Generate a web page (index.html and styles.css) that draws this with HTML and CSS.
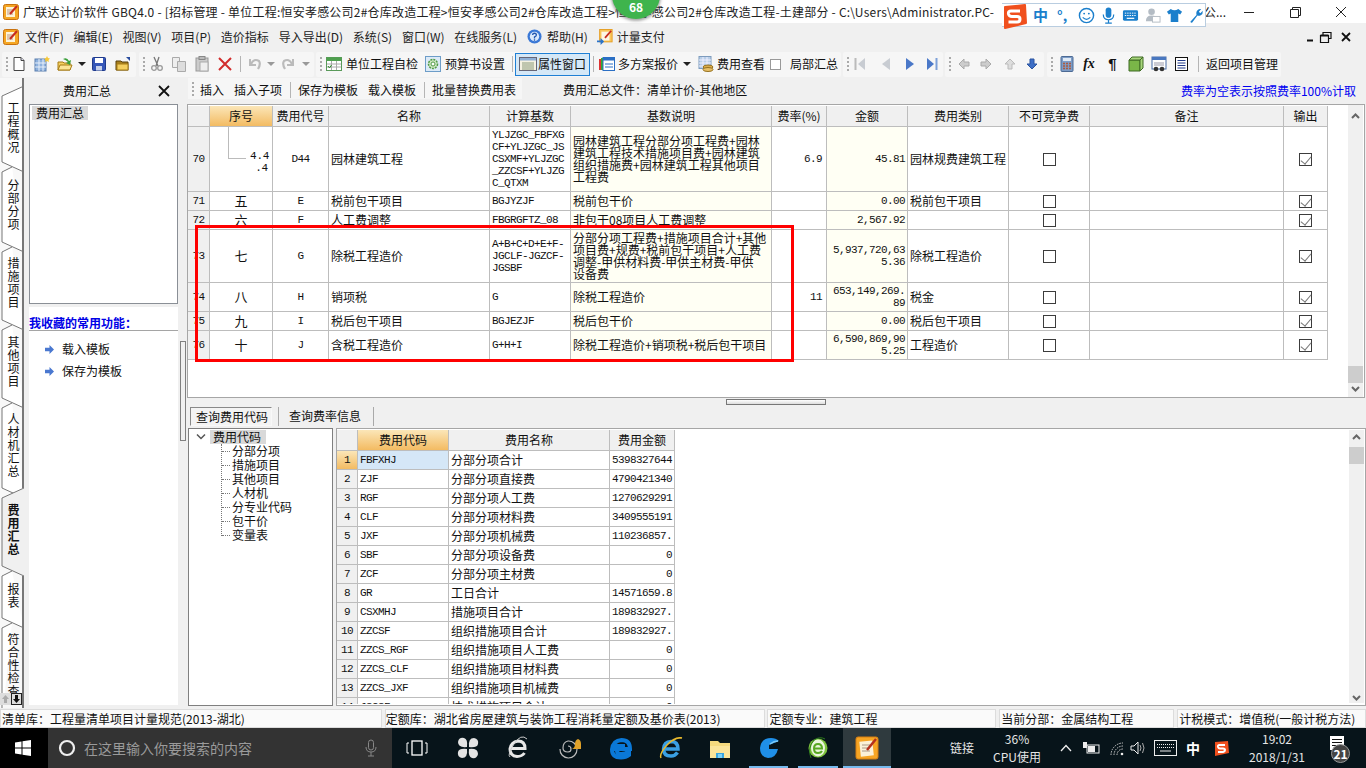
FILE: index.html
```html
<!DOCTYPE html>
<html lang="zh-CN">
<head>
<meta charset="utf-8">
<title>广联达计价软件 GBQ4.0</title>
<link rel="stylesheet" href="styles.css">
</head>
<body>
<header class="titlebar">
  <svg class="appicon" viewBox="0 0 16 16"><rect x="0.5" y="0.5" width="15" height="15" rx="2" fill="#f5a623" stroke="#c9720e"/><rect x="3" y="3" width="9" height="10" fill="#fdf3d8"/><path d="M4 6h6M4 8h5M4 10h6" stroke="#b98" /><path d="M14 2L7 10" stroke="#c62b1e" stroke-width="2"/></svg>
  <div class="ttext">广联达计价软件 GBQ4.0 - [招标管理 - 单位工程:恒安孝感公司2#仓库改造工程&gt;恒安孝感公司2#仓库改造工程&gt;恒安孝感公司2#仓库改造工程-土建部分 - C:\Users\Administrator.PC-</div>
  <div class="tend">公...</div>
  <div class="winctl">
    <svg viewBox="0 0 46 22"><path d="M18 11.5h10" stroke="#222"/></svg>
    <svg viewBox="0 0 46 22"><path d="M18.5 8.5h8v8h-8zM20.5 8V6.5h8v8H27" fill="none" stroke="#222"/></svg>
    <svg viewBox="0 0 46 22"><path d="M18 6l10 10M28 6L18 16" stroke="#222"/></svg>
  </div>
</header>
<div class="badge"><span>68</span></div>
<div class="sogou">
  <svg class="slogo" viewBox="0 0 25 25"><path d="M3 3L23 1L24 19L3 24Z" fill="#f0501e" stroke="#f0501e" stroke-width="2" stroke-linejoin="round"/><path d="M18 7H9Q6 7 6.500 10Q7 12.500 10 12.500H15Q18 12.500 18 15Q18 18 15 18H6.500" fill="none" stroke="#fff" stroke-width="3"/></svg>
  <span class="szh">中</span><span class="sdot">°,</span>
  <svg class="sic" viewBox="0 0 18 18"><circle cx="9" cy="9" r="7.500" fill="none" stroke="#1b7fcc" stroke-width="1.500"/><circle cx="6.500" cy="7" r="1" fill="#1b7fcc"/><circle cx="11.500" cy="7" r="1" fill="#1b7fcc"/><path d="M5 11q4 4 8 0" fill="none" stroke="#1b7fcc" stroke-width="1.300"/></svg>
  <svg class="sic" viewBox="0 0 18 18"><rect x="6" y="0.500" width="6" height="11" rx="3" fill="#1b7fcc"/><path d="M3.500 8q0 5.500 5.500 5.500t5.500-5.500M9 13.500V17M5.500 17h7" fill="none" stroke="#1b7fcc" stroke-width="1.300"/></svg>
  <svg class="sic" viewBox="0 0 18 18"><rect x="1" y="3.500" width="16" height="11" rx="1.500" fill="#1b7fcc"/><path d="M3 6.500h12M3 9h12" stroke="#fff" stroke-dasharray="1.500 1"/><path d="M5 12h8" stroke="#fff" stroke-width="1.300"/></svg>
  <svg class="sic" viewBox="0 0 18 18"><circle cx="8" cy="5" r="3.500" fill="#b4bcc4"/><path d="M2 15q0-6 6-6t6 6z" fill="#b4bcc4"/><rect x="9" y="10" width="8" height="6" fill="#fff" stroke="#b4bcc4"/></svg>
  <svg class="sic" viewBox="0 0 18 18"><path d="M5 2L1 5l2 3 2-1v9h8V7l2 1 2-3-4-3q-4 3-8 0z" fill="#1b7fcc"/></svg>
  <svg class="sic" viewBox="0 0 18 18"><path d="M2.500 15.500L9 8.500Q8 4 11.500 2.500Q13 2 14 2.200L11.500 5l1.500 1.500L15.700 4Q16 7.500 13.500 8.800Q11.500 9.800 10 9L4.500 16.500Q3 17 2.500 15.500z" fill="#1b7fcc"/></svg>
</div>

<nav class="menubar">
  <svg class="appicon" viewBox="0 0 16 16"><rect x="0.5" y="0.5" width="15" height="15" rx="2" fill="#f5a623" stroke="#c9720e"/><rect x="3" y="3" width="9" height="10" fill="#fdf3d8"/><path d="M4 6h6M4 8h5M4 10h6" stroke="#b98"/><path d="M14 2L7 10" stroke="#c62b1e" stroke-width="2"/></svg>
  <span class="mi m1">文件(F)</span><span class="mi">编辑(E)</span><span class="mi">视图(V)</span><span class="mi">项目(P)</span><span class="mi">造价指标</span><span class="mi">导入导出(D)</span><span class="mi">系统(S)</span><span class="mi">窗口(W)</span><span class="mi">在线服务(L)</span>
  <svg class="i15 ml10" viewBox="0 0 16 16"><circle cx="8" cy="8" r="7.500" fill="#3a78d6"/><circle cx="8" cy="8" r="5" fill="#dbe9fb"/><path d="M6 6.500q0-2 2-2t2 2q0 1.500-2 2V10M8 11v1.500" fill="none" stroke="#2458b0" stroke-width="1.400"/></svg>
  <span class="mi ml5">帮助(H)</span>
  <svg class="i18 ml8" viewBox="0 0 18 18"><rect x="3" y="0.500" width="14" height="14" fill="#f9c75c" stroke="#e49a1c"/><rect x="5" y="3" width="9" height="10" fill="#fdf6e5"/><path d="M16 2L9 10" stroke="#c62b1e" stroke-width="2"/><path d="M0 13h4v-3l4 4-4 4v-3H0z" fill="#2b73c9"/></svg>
  <span class="mi ml3">计量支付</span>
  <div class="mdi">
    <svg viewBox="0 0 60 14"><path d="M5 10.500h6" stroke="#111" stroke-width="2"/><path d="M18.500 5.500h8v7h-8z M21 5V2.500h8v6h-2" fill="none" stroke="#111" stroke-width="1.200"/><path d="M18.500 5.500h8" stroke="#111" stroke-width="2"/><path d="M40 3l8 8M48 3l-8 8" stroke="#111" stroke-width="1.800"/></svg>
  </div>
</nav>

<div class="toolbar">
  <div class="seg s1">
    <i class="grip"></i>
    <svg class="i16 ml3" viewBox="0 0 16 16"><path d="M3 1.500h7l3 3v10H3z" fill="#fff" stroke="#444"/><path d="M10 1.500v3h3" fill="#dde" stroke="#444"/></svg>
    <svg class="i16 ml7" viewBox="0 0 16 16"><rect x="1" y="3" width="11" height="12" fill="#8fb2de" stroke="#5b7fae"/><path d="M1 7h11M1 11h11M5 3v12M9 3v12" stroke="#e8f0fa"/><path d="M13 0l1 2 2 .5-1.500 1.500.5 2-2-1-2 1 .5-2L10 2.500 12 2z" fill="#f6c93b"/></svg>
    <svg class="i16 ml7" viewBox="0 0 16 16"><path d="M1 6h5l1 1h6v7H1z" fill="#f4cf5f" stroke="#a67c16"/><path d="M1 14l2-5h12l-2 5z" fill="#fce596" stroke="#a67c16"/><path d="M6 3q4-2 6 2l2-1-1 5-4-2 2-1q-2-2-5-3z" fill="#3aa03a"/></svg>
    <i class="caret ml5"></i>
    <svg class="i16 ml5" viewBox="0 0 16 16"><rect x="1.500" y="1.500" width="13" height="13" rx="1" fill="#3657b8" stroke="#1f3a8c"/><rect x="4" y="2" width="8" height="5" fill="#fff"/><rect x="5" y="10" width="6" height="4.500" fill="#c8d2ea"/></svg>
    <svg class="i16 ml8" viewBox="0 0 16 16"><path d="M1 5h5l1 1h6v8H1z" fill="#a8801f" stroke="#59410c"/><rect x="2" y="8" width="11" height="6" fill="#f4cf5f" stroke="#a67c16"/><path d="M11 1h4v4z" fill="#2a4d9e"/></svg>
  </div>
  <div class="seg s2">
    <i class="grip"></i>
    <svg class="i16 ml4 dim" viewBox="0 0 16 16"><path d="M5 1l4 9M10 1L7 10" stroke="#777" stroke-width="1.300"/><circle cx="5" cy="12" r="2.300" fill="none" stroke="#999" stroke-width="1.300"/><circle cx="11" cy="12" r="2.300" fill="none" stroke="#999" stroke-width="1.300"/></svg>
    <svg class="i16 ml6 dim" viewBox="0 0 16 16"><path d="M1.500 1.500h7v10h-7z" fill="#eee" stroke="#aaa"/><path d="M6.500 5.500h8v10h-8z" fill="#ddd" stroke="#aaa"/></svg>
    <svg class="i16 ml7 dim" viewBox="0 0 16 16"><rect x="2" y="2" width="12" height="13" fill="#ccc" stroke="#999"/><rect x="5" y="0.500" width="6" height="3" fill="#bbb" stroke="#888"/><rect x="6" y="6" width="8" height="9" fill="#eee" stroke="#aaa"/></svg>
    <svg class="i16 ml7" viewBox="0 0 16 16"><path d="M2 2l12 12M14 2L2 14" stroke="#d22c2c" stroke-width="2"/></svg>
    <i class="sep ml7"></i>
    <svg class="i16 ml5" viewBox="0 0 16 16"><path d="M4 3v6h6" fill="none" stroke="#bbb" stroke-width="2"/><path d="M5 8q3-6 8-3 2 3-1 8" fill="none" stroke="#bbb" stroke-width="2.200"/></svg>
    <i class="caret off ml5"></i>
    <svg class="i16 ml6" viewBox="0 0 16 16"><path d="M12 3v6H6" fill="none" stroke="#bbb" stroke-width="2"/><path d="M11 8q-3-6-8-3-2 3 1 8" fill="none" stroke="#bbb" stroke-width="2.200"/></svg>
    <i class="caret off ml5"></i>
  </div>
  <div class="seg s3">
    <i class="grip"></i>
    <svg class="i16 ml4" viewBox="0 0 16 16"><rect x="0.500" y="1.500" width="15" height="13" fill="#fff" stroke="#5a9a5a"/><rect x="0.500" y="1.500" width="15" height="3.500" fill="#4fa04f"/><path d="M1 8h14M1 11h14M5.500 5v9M10.500 5v9" stroke="#aaa"/><path d="M2 10l1.500 2 2-3" stroke="#2c8c2c" fill="none"/></svg>
    <span class="ti ml4">单位工程自检</span>
    <svg class="i16 ml7" viewBox="0 0 16 16"><rect x="0.500" y="0.500" width="15" height="15" fill="#dceaf7" stroke="#6d9dc8"/><circle cx="8" cy="8" r="4.500" fill="#cfe8c0" stroke="#4f9a46" stroke-width="1.500" stroke-dasharray="2 1"/><circle cx="8" cy="8" r="2" fill="#fff" stroke="#4f9a46"/></svg>
    <span class="ti ml4">预算书设置</span>
    <i class="sep ml7"></i>
    <div class="tbtn ml2">
      <svg class="i18" viewBox="0 0 18 16"><rect x="0.500" y="1.500" width="17" height="13" fill="#f4f1e2" stroke="#667"/><rect x="1" y="2" width="16" height="2.500" fill="#8fb0d6"/><path d="M3 7h12M3 9h12M3 11h12M3 13h12" stroke="#8a9a7a"/></svg>
      <span class="ti">属性窗口</span>
    </div>
    <i class="sep ml3"></i>
    <svg class="i16 ml5" viewBox="0 0 16 16"><rect x="0" y="3" width="3" height="11" fill="#d33"/><rect x="2" y="2" width="3" height="12" fill="#3a3"/><rect x="4" y="1.500" width="11.500" height="13" fill="#fff" stroke="#2b6fc4"/><rect x="4" y="1.500" width="11.500" height="3" fill="#2b6fc4"/><path d="M6 8h8M6 11h8" stroke="#2b6fc4"/></svg>
    <span class="ti ml3">多方案报价</span>
    <i class="caret ml5"></i>
    <svg class="i16 ml7" viewBox="0 0 16 16"><rect x="1" y="0.500" width="12" height="12" fill="#b9cfe8" stroke="#7d9bbd"/><path d="M1 4h12M1 7h12M1 10h12M5 1v11M9 1v11" stroke="#eef"/><ellipse cx="10" cy="11" rx="5" ry="2" fill="#d9ab4d" stroke="#94701f"/><ellipse cx="10" cy="13.500" rx="5" ry="2" fill="#e8c068" stroke="#94701f"/></svg>
    <span class="ti ml3">费用查看</span>
    <i class="tcb ml5"></i>
    <span class="ti ml9">局部汇总</span>
  </div>
  <div class="seg s4">
    <i class="grip"></i>
    <svg class="i12 ml5" viewBox="0 0 12 14"><path d="M1.500 1v12" stroke="#bbb" stroke-width="2"/><path d="M11 1v12L4 7z" fill="#c8ccd2"/></svg>
    <svg class="i12 ml14" viewBox="0 0 12 14"><path d="M10 1v12L2 7z" fill="#c8ccd2"/></svg>
    <svg class="i12 ml12" viewBox="0 0 12 14"><path d="M2 1v12l8-6z" fill="#4a78c8"/></svg>
    <svg class="i12 ml10" viewBox="0 0 12 14"><path d="M10.500 1v12" stroke="#7da0d8" stroke-width="2"/><path d="M1 1v12l7-6z" fill="#4a78c8"/></svg>
  </div>
  <div class="seg s5">
    <i class="grip"></i>
    <svg class="i12 ml7" viewBox="0 0 12 12"><path d="M6 1L1 6l5 5V8h5V4H6z" fill="#ccc" stroke="#aaa"/></svg>
    <svg class="i12 ml10" viewBox="0 0 12 12"><path d="M6 1l5 5-5 5V8H1V4h5z" fill="#ccc" stroke="#aaa"/></svg>
    <svg class="i12 ml12" viewBox="0 0 12 12"><path d="M1 6l5-5 5 5H8v5H4V6z" fill="#ddd" stroke="#bbb"/></svg>
    <svg class="i12 ml10" viewBox="0 0 12 12"><path d="M1 6l5 5 5-5H8V1H4v5z" fill="#3e6fc6" stroke="#2b55a0"/></svg>
  </div>
  <div class="seg s6">
    <i class="grip"></i>
    <svg class="i16 ml6" viewBox="0 0 16 16"><rect x="2" y="0.500" width="12" height="15" rx="1" fill="#7c9cc6" stroke="#4c6a94"/><rect x="4" y="2" width="8" height="3" fill="#dfe9f5"/><path d="M4 7.500h2M7 7.500h2M10 7.500h2M4 10h2M7 10h2M10 10h2M4 12.500h2M7 12.500h2M10 12.500h2" stroke="#ad5a3d" stroke-width="1.500"/></svg>
    <span class="fx ml6">fx</span>
    <span class="pil ml8">¶</span>
    <svg class="i16 ml8" viewBox="0 0 16 16"><path d="M1 4h11v11H1z" fill="#7ab648" stroke="#3f6a24"/><path d="M1 4l3-3h11l-3 3zM12 4l3-3v11l-3 3z" fill="#a8d67c" stroke="#3f6a24"/></svg>
    <svg class="i16 ml7" viewBox="0 0 16 16"><rect x="1" y="1" width="14" height="12" fill="#fff" stroke="#4a6ea8"/><rect x="1" y="1" width="14" height="3" fill="#4a78c0"/><path d="M3 7h10M3 9h10" stroke="#99a"/><circle cx="5" cy="13" r="2.300" fill="#333"/><circle cx="11" cy="13" r="2.300" fill="#333"/></svg>
    <svg class="i16 ml7" viewBox="0 0 16 16"><rect x="1.500" y="1.500" width="12" height="13" fill="#fff" stroke="#111"/><path d="M3.500 4.500h8M3.500 7h8M3.500 9.500h8M3.500 12h8" stroke="#223a88"/></svg>
    <i class="sep ml8"></i>
    <span class="ti ml7">返回项目管理</span>
  </div>
</div>

<div class="work">
  <aside class="rail">
    <svg class="railart" viewBox="0 78 24 630">
      <g fill="#fff" stroke="#777">
        <path d="M24 86L2 96V162L24 172"/>
        <path d="M12 167L2 172V242L24 252"/>
        <path d="M12 247L2 252V320L24 330"/>
        <path d="M12 325L2 330V398L24 408"/>
        <path d="M12 403L2 408V488L24 498"/>
        <path d="M12 571L2 576V618L24 628"/>
        <path d="M12 623L2 628V720"/>
      </g>
      <path d="M24 488L2 498V566L24 576" fill="#f0f0f0" stroke="#777"/>
      <path d="M23 78V488M23 576V708" stroke="#777" stroke-width="2" fill="none"/>
    </svg>
    <div class="rl">工程概况</div>
    <div class="rl">分部分项</div>
    <div class="rl">措施项目</div>
    <div class="rl">其他项目</div>
    <div class="rl">人材机汇总</div>
    <div class="rl on">费用汇总</div>
    <div class="rl">报表</div>
    <div class="rl">符合性检查</div>
    <div class="railnav">
      <svg viewBox="0 0 11 12"><rect width="11" height="12" fill="#ddd"/><path d="M5.500 2L2 6h2v4h3V6h2z" fill="#aaa"/></svg>
      <svg viewBox="0 0 11 12"><rect x="0.500" y="0.500" width="10" height="11" fill="#ddd" stroke="#222"/><path d="M5.500 10L2 6h2V2h3v4h2z" fill="#111"/></svg>
    </div>
  </aside>

  <section class="side">
    <div class="sidehead"><span>费用汇总</span><svg viewBox="0 0 12 12"><path d="M1 1l10 10M11 1L1 11" stroke="#111" stroke-width="1.800"/></svg></div>
    <div class="listbox"><span class="selitem">费用汇总</span></div>
    <div class="fav">
      <div class="favhead">我收藏的常用功能：</div>
      <div class="favitem"><svg viewBox="0 0 10 10"><path d="M0 3h5V0l5 5-5 5V7H0z" fill="#4a78d0"/></svg>载入模板</div>
      <div class="favitem"><svg viewBox="0 0 10 10"><path d="M0 3h5V0l5 5-5 5V7H0z" fill="#4a78d0"/></svg>保存为模板</div>
    </div>
  </section>
  <div class="vsplit"><i></i></div>

  <main class="main">
    <div class="bar2">
      <div class="seg2">
        <i class="grip"></i>
        <span class="ml6">插入</span><span class="ml10">插入子项</span><i class="sep ml8"></i><span class="ml7">保存为模板</span><span class="ml10">载入模板</span><i class="sep ml8"></i><span class="ml7">批量替换费用表</span>
      </div>
      <div class="filelabel">费用汇总文件：清单计价-其他地区</div>
      <div class="ratenote">费率为空表示按照费率100%计取</div>
    </div>

    <div class="pane">
      <div class="gridwrap">
        <table class="grid top">
          <colgroup><col class="c22"><col class="c63"><col class="c56"><col class="c161"><col class="c81"><col class="c201"><col class="c55"><col class="c81"><col class="c101"><col class="c81"><col class="c194"><col class="c44"></colgroup>
          <thead>
            <tr class="h21"><th></th><th class="hot">序号</th><th>费用代号</th><th>名称</th><th>计算基数</th><th>基数说明</th><th>费率(%)</th><th>金额</th><th>费用类别</th><th>不可竞争费</th><th>备注</th><th>输出</th></tr>
          </thead>
          <tbody>
            <tr class="h65"><td class="rn">70</td><td class="seq tree"><span class="treeline"></span><span class="num n44">4.4<br>.4</span></td><td class="code">D44</td><td>园林建筑工程</td><td class="base">YLJZGC_FBFXG<br>CF+YLJZGC_JS<br>CSXMF+YLJZGC<br>_ZZCSF+YLJZG<br>C_QTXM</td><td class="desc">园林建筑工程分部分项工程费+园林<br>建筑工程技术措施项目费+园林建筑<br>组织措施费+园林建筑工程其他项目<br>工程费</td><td class="rate">6.9</td><td class="amt">45.81</td><td>园林规费建筑工程</td><td class="ck"><i class="cb"></i></td><td></td><td class="ck"><i class="cb on"></i></td></tr>
            <tr class="h19"><td class="rn">71</td><td class="seq">五</td><td class="code">E</td><td>税前包干项目</td><td class="base">BGJYZJF</td><td class="desc">税前包干价</td><td class="rate"></td><td class="amt">0.00</td><td>税前包干项目</td><td class="ck"><i class="cb"></i></td><td></td><td class="ck"><i class="cb on"></i></td></tr>
            <tr class="h19"><td class="rn">72</td><td class="seq">六</td><td class="code">F</td><td>人工费调整</td><td class="base">FBGRGFTZ_08</td><td class="desc">非包干08项目人工费调整</td><td class="rate"></td><td class="amt">2,567.92</td><td></td><td class="ck"><i class="cb"></i></td><td></td><td class="ck"><i class="cb on"></i></td></tr>
            <tr class="h53"><td class="rn">73</td><td class="seq">七</td><td class="code">G</td><td>除税工程造价</td><td class="base">A+B+C+D+E+F-<br>JGCLF-JGZCF-<br>JGSBF</td><td class="desc">分部分项工程费+措施项目合计+其他<br>项目费+规费+税前包干项目+人工费<br>调整-甲供材料费-甲供主材费-甲供<br>设备费</td><td class="rate"></td><td class="amt">5,937,720,63<br>5.36</td><td>除税工程造价</td><td class="ck"><i class="cb"></i></td><td></td><td class="ck"><i class="cb on"></i></td></tr>
            <tr class="h29"><td class="rn">74</td><td class="seq">八</td><td class="code">H</td><td>销项税</td><td class="base">G</td><td class="desc">除税工程造价</td><td class="rate">11</td><td class="amt">653,149,269.<br>89</td><td>税金</td><td class="ck"><i class="cb"></i></td><td></td><td class="ck"><i class="cb on"></i></td></tr>
            <tr class="h19"><td class="rn">75</td><td class="seq">九</td><td class="code">I</td><td>税后包干项目</td><td class="base">BGJEZJF</td><td class="desc">税后包干价</td><td class="rate"></td><td class="amt">0.00</td><td>税后包干项目</td><td class="ck"><i class="cb"></i></td><td></td><td class="ck"><i class="cb on"></i></td></tr>
            <tr class="h29"><td class="rn">76</td><td class="seq">十</td><td class="code">J</td><td>含税工程造价</td><td class="base">G+H+I</td><td class="desc">除税工程造价+销项税+税后包干项目</td><td class="rate"></td><td class="amt">6,590,869,90<br>5.25</td><td>工程造价</td><td class="ck"><i class="cb"></i></td><td></td><td class="ck"><i class="cb on"></i></td></tr>
          </tbody>
        </table>
      </div>
      <div class="vscroll one">
        <svg class="arrow" viewBox="0 0 15 10"><path d="M4 7l3.500-3.500L11 7" fill="none" stroke="#666" stroke-width="2"/></svg>
        <div class="thumb"></div>
        <svg class="arrow" viewBox="0 0 15 10"><path d="M4 3l3.500 3.500L11 3" fill="none" stroke="#666" stroke-width="2"/></svg>
      </div>
      <div class="redbox"></div>
    </div>

    <div class="hsplit"><i></i></div>

    <div class="tabs">
      <span class="tab active">查询费用代码</span><i class="tabsep"></i><span class="tab">查询费率信息</span><i class="tabsep"></i>
    </div>

    <div class="lower">
      <div class="treebox">
        <div class="troot"><svg viewBox="0 0 10 8"><path d="M1 1.500l4 4 4-4" fill="none" stroke="#555" stroke-width="1.500"/></svg><span>费用代码</span></div>
        <ul>
          <li>分部分项</li><li>措施项目</li><li>其他项目</li><li>人材机</li><li>分专业代码</li><li>包干价</li><li>变量表</li>
        </ul>
      </div>
      <div class="codebox">
        <div class="gridwrap">
          <table class="grid low">
            <colgroup><col class="c21"><col class="c91"><col class="c161"><col class="c65"></colgroup>
            <thead><tr class="h21"><th></th><th class="hot">费用代码</th><th>费用名称</th><th>费用金额</th></tr></thead>
            <tbody>
              <tr class="h19"><td class="rn hotrn">1</td><td class="cd sel">FBFXHJ</td><td>分部分项合计</td><td class="val">5398327644</td></tr>
              <tr class="h19"><td class="rn">2</td><td class="cd">ZJF</td><td>分部分项直接费</td><td class="val">4790421340</td></tr>
              <tr class="h19"><td class="rn">3</td><td class="cd">RGF</td><td>分部分项人工费</td><td class="val">1270629291</td></tr>
              <tr class="h19"><td class="rn">4</td><td class="cd">CLF</td><td>分部分项材料费</td><td class="val">3409555191</td></tr>
              <tr class="h19"><td class="rn">5</td><td class="cd">JXF</td><td>分部分项机械费</td><td class="val">110236857.</td></tr>
              <tr class="h19"><td class="rn">6</td><td class="cd">SBF</td><td>分部分项设备费</td><td class="val">0</td></tr>
              <tr class="h19"><td class="rn">7</td><td class="cd">ZCF</td><td>分部分项主材费</td><td class="val">0</td></tr>
              <tr class="h19"><td class="rn">8</td><td class="cd">GR</td><td>工日合计</td><td class="val">14571659.8</td></tr>
              <tr class="h19"><td class="rn">9</td><td class="cd">CSXMHJ</td><td>措施项目合计</td><td class="val">189832927.</td></tr>
              <tr class="h19"><td class="rn">10</td><td class="cd">ZZCSF</td><td>组织措施项目合计</td><td class="val">189832927.</td></tr>
              <tr class="h19"><td class="rn">11</td><td class="cd">ZZCS_RGF</td><td>组织措施项目人工费</td><td class="val">0</td></tr>
              <tr class="h19"><td class="rn">12</td><td class="cd">ZZCS_CLF</td><td>组织措施项目材料费</td><td class="val">0</td></tr>
              <tr class="h19"><td class="rn">13</td><td class="cd">ZZCS_JXF</td><td>组织措施项目机械费</td><td class="val">0</td></tr>
              <tr class="h19"><td class="rn">14</td><td class="cd">JSCSF</td><td>技术措施项目合计</td><td class="val">0</td></tr>
            </tbody>
          </table>
        </div>
        <div class="vscroll two">
          <svg class="arrow" viewBox="0 0 15 10"><path d="M4 7l3.500-3.500L11 7" fill="none" stroke="#666" stroke-width="2"/></svg>
          <div class="thumb"></div>
          <svg class="arrow" viewBox="0 0 15 10"><path d="M4 3l3.500 3.500L11 3" fill="none" stroke="#666" stroke-width="2"/></svg>
        </div>
      </div>
    </div>
  </main>
</div>

<footer class="status">
  <div class="sc s-a">清单库：工程量清单项目计量规范(2013-湖北)</div>
  <div class="sc s-b">定额库：湖北省房屋建筑与装饰工程消耗量定额及基价表(2013)</div>
  <div class="sc s-c">定额专业：建筑工程</div>
  <div class="sc s-d">当前分部：金属结构工程</div>
  <div class="sc s-e">计税模式：增值税(一般计税方法)</div>
</footer>

<div class="taskbar">
  <div class="start"><svg viewBox="0 0 16 16"><path d="M0 2.500l6.500-1v6H0zM7.500 1.300L16 0v7.500H7.500zM0 8.500h6.500v6l-6.500-1zM7.500 8.500H16V16l-8.500-1.300z" fill="#fff"/></svg></div>
  <div class="search">
    <svg class="ring" viewBox="0 0 18 18"><circle cx="9" cy="9" r="7" fill="none" stroke="#eee" stroke-width="2.200"/></svg>
    <span>在这里输入你要搜索的内容</span>
    <svg class="mic" viewBox="0 0 12 18"><rect x="3.500" y="1" width="5" height="10" rx="2.500" fill="none" stroke="#888"/><path d="M1 8q0 5 5 5t5-5M6 13v4M3 17h6" fill="none" stroke="#888"/></svg>
  </div>
  <div class="apps">
    <div class="app"><svg viewBox="0 0 24 24"><rect x="7" y="5" width="10" height="14" fill="none" stroke="#fff" stroke-width="1.300"/><path d="M4 7H2v10h2M20 7h2v10h-2" fill="none" stroke="#fff"/></svg></div>
    <div class="app"><svg viewBox="0 0 24 24"><g fill="#e4e4e4"><path d="M11 11Q2 12 2 6Q3 1 8 2Q12 3 11 11z"/><path d="M13 11Q12 2 18 2Q23 3 22 8Q21 12 13 11z"/><path d="M13 13Q22 12 22 18Q21 23 16 22Q12 21 13 13z"/><path d="M11 13Q12 22 6 22Q1 21 2 16Q3 12 11 13z"/></g></svg></div>
    <div class="app"><svg viewBox="0 0 24 24"><path d="M3.500 12.500H19Q19 5 12 5Q5 6 4 13Q4 20 11 20.500Q16 20.500 18.500 17" fill="none" stroke="#e8e8e8" stroke-width="3"/><path d="M4 21Q1 19 8 8T21 3" fill="none" stroke="#ccc"/></svg></div>
    <div class="app"><svg viewBox="0 0 24 24"><path d="M3 13a8.500 8.500 0 1 0 8-8q-5 1-5 7 0 4 5 4 3 0 3-3t-3-3" fill="none" stroke="#bbb" stroke-width="1.200"/><path d="M15 13q3-1 3-5t3-5q3 1 3 5t2 5z" fill="#e0a22a"/></svg></div>
    <div class="app"><svg viewBox="0 0 24 24"><path d="M3.500 13H21Q21 4 12.500 4Q4 4.500 3 13.500Q3 21.500 12 21.500Q17 21.500 20 19V15.500Q16 18 12 18Q8 18 8 15V10H16" fill="none" stroke="#0a78d7" stroke-width="4"/></svg></div>
    <div class="app"><svg viewBox="0 0 24 24"><path d="M4 13H19Q19 5.500 12 5.500Q5 6 4.500 13Q4.500 20 12 20Q16 20 18.500 16.500" fill="none" stroke="#3a9fe3" stroke-width="3.500"/><path d="M2 22Q0 18 8 9T23 2Q19 1 13 5" fill="none" stroke="#e8b92e" stroke-width="1.500"/></svg></div>
    <div class="app"><svg viewBox="0 0 24 24"><path d="M2 5h8l2 2h10v15H2z" fill="#f5d97e"/><path d="M2 10h20v12H2z" fill="#fbe49a"/><path d="M8 22v-5h8v5h-2.500v-3h-3v3z" fill="#39a5e0"/><rect x="10" y="18" width="4" height="4" fill="#7fd0f5"/></svg></div>
    <div class="app run"><svg viewBox="0 0 24 24"><path d="M14 2Q4 2 3 12Q3 21 11 22Q19 22 21 13L12 13V9L22 5Q19 2 14 2z" fill="#1f8fe8"/><path d="M13 8q4-3 8-3" stroke="#7ccaf7" stroke-width="1.500" fill="none"/></svg></div>
    <div class="app run"><svg viewBox="0 0 24 24"><circle cx="12" cy="12" r="9.500" fill="#7ec23d"/><ellipse cx="12" cy="12" rx="7" ry="8.500" fill="#eaf5dc"/><path d="M7.500 12.500H16Q16 8 12 8T8 12.500Q8 17 12 17 15 17 16 15" fill="none" stroke="#58a822" stroke-width="2"/><path d="M5 22Q1 12 8 4q6-4 11-1" fill="none" stroke="#2c7a1d"/></svg></div>
    <div class="app run active"><svg viewBox="0 0 24 24"><rect x="1" y="1" width="22" height="22" rx="2" fill="#f6a524" stroke="#d77f10"/><rect x="5" y="5" width="13" height="15" fill="#fbf1d8" transform="rotate(-6 12 12)"/><path d="M7 9h8M7 12h8M7 15h8" stroke="#a98" /><path d="M21 3L12 14" stroke="#b5301d" stroke-width="2.500"/></svg></div>
  </div>
  <div class="tray">
    <span class="tlink">链接</span>
    <div class="cpu"><span>36%</span><span>CPU使用</span></div>
    <svg class="tr t1" viewBox="0 0 12 8"><path d="M1 7l5-5.500L11 7" fill="none" stroke="#eee" stroke-width="1.300"/></svg>
    <svg class="tr t2" viewBox="0 0 18 14"><rect x="5" y="4" width="12" height="8" fill="none" stroke="#eee"/><rect x="6" y="5" width="7" height="6" fill="#eee"/><path d="M1 1h4v6H1z" fill="#eee"/></svg>
    <svg class="tr t3" viewBox="0 0 16 16"><path d="M2 15A12 12 0 0 1 14 3M5 15A9 9 0 0 1 14 6M8 15A6 6 0 0 1 14 9" fill="none" stroke="#ccc" stroke-dasharray="1.500 1"/><circle cx="13" cy="14" r="1.300" fill="#eee"/></svg>
    <svg class="tr t4" viewBox="0 0 16 16"><path d="M1 6h3l4-4v12l-4-4H1z" fill="none" stroke="#eee"/><path d="M10 5q2 3 0 6M12.500 3q3 5 0 10" fill="none" stroke="#aaa"/></svg>
    <svg class="tr t5" viewBox="0 0 23 16"><rect x="0.500" y="0.500" width="22" height="15" fill="none" stroke="#eee"/><path d="M3 4.500h17M3 7.500h17" stroke="#eee" stroke-dasharray="1 1"/><path d="M6 11h11" stroke="#eee"/></svg>
    <span class="tzh">中</span>
    <svg class="tr t6" viewBox="0 0 17 17"><path d="M2 2L15 1L16 13L2 16Z" fill="#f0501e"/><path d="M12 5H6.500Q4.500 5 5 7Q5.500 8.500 7 8.500H10Q12 8.500 12 10T10 12H5" fill="none" stroke="#fff" stroke-width="2"/></svg>
    <div class="clock"><span>19:02</span><span>2018/1/31</span></div>
    <div class="notif"><svg viewBox="0 0 14 14"><path d="M0 0h14v14H0z" fill="#fff"/><path d="M2 3.500h10M2 6.500h10M2 9.500h7" stroke="#111"/></svg><span>21</span></div>
  </div>
</div>
</body>
</html>
```
FILE: styles.css
```css
* { box-sizing: border-box; }
html, body { margin: 0; padding: 0; }
body {
  width: 1366px; height: 768px; overflow: hidden; position: relative;
  background: #f0f0f0; color: #111;
  font: 12px/14px "Noto Sans CJK SC", sans-serif;
  display: flex; flex-direction: column;
}
svg { display: block; flex: none; }
i { display: block; flex: none; font-style: normal; }

/* spacing helpers */
.ml2 { margin-left: 2px; } .ml3 { margin-left: 3px; } .ml4 { margin-left: 4px; } .ml5 { margin-left: 5px; }
.ml6 { margin-left: 6px; } .ml7 { margin-left: 7px; } .ml8 { margin-left: 8px; } .ml9 { margin-left: 9px; }
.ml10 { margin-left: 10px; } .ml12 { margin-left: 12px; } .ml14 { margin-left: 14px; }
.i12 { width: 12px; height: 14px; } .i15 { width: 15px; height: 15px; } .i16 { width: 16px; height: 16px; } .i18 { width: 18px; height: 16px; }

/* title */
.titlebar { height: 23px; background: #fff; display: flex; align-items: center; padding-left: 3px; flex: none; }
.appicon { width: 16px; height: 16px; }
.ttext { width: 1183px; margin-left: 4px; white-space: nowrap; overflow: hidden; line-height: 22px; color: #222; letter-spacing: .22px; }
.tend { color: #222; line-height: 22px; width: 22px; }
.winctl { display: flex; margin-left: auto; margin-right: 2px; }
.winctl svg { width: 46px; height: 22px; }
.badge {
  position: absolute; left: 612px; top: -29px; width: 48px; height: 48px; border-radius: 50%;
  background: #3fb44d; box-shadow: 0 1px 3px 1px rgba(90,90,90,.55);
  color: #fff; font-weight: 700; display: flex; align-items: flex-end; justify-content: center; padding-bottom: 5px;
}
.sogou {
  position: absolute; left: 1002px; top: 3px; width: 204px; height: 24px;
  display: flex; align-items: center; background: rgba(255,255,255,.97); border: 1px solid #b9cde0; border-left: 0;
}
.slogo { width: 25px; height: 25px; margin-top: 2px; }
.szh { color: #1b7fcc; font-weight: 700; font-size: 15px; margin-left: 6px; width: 16px; }
.sdot { color: #1b7fcc; font-weight: 700; width: 14px; margin-left: 9px; line-height: 14px; font-size: 14px; }
.sic { width: 17px; height: 17px; margin-left: 5px; }
.sdot + .sic { margin-left: 9px; }

/* menu */
.menubar { height: 27px; display: flex; align-items: center; padding-left: 3px; flex: none; color: #222; }
.mi { margin-left: 9.800px; white-space: nowrap; }
.mi.m1 { margin-left: 6px; }
.mi.ml5 { margin-left: 5px; } .mi.ml3 { margin-left: 3px; }
.mdi { margin-left: auto; margin-right: 4px; }
.mdi svg { width: 60px; height: 14px; }

/* toolbar */
.toolbar { height: 28px; display: flex; align-items: center; flex: none; padding-left: 2px; }
.seg { height: 25px; background: #f6f6f6; border-radius: 2px; display: flex; align-items: center; padding-left: 3px; flex: none; }
.s1 { width: 134px; } .s2 { width: 175px; margin-left: 3px; } .s3 { width: 525px; margin-left: 2px; }
.s4 { width: 100px; margin-left: 2px; } .s5 { width: 99px; margin-left: 2px; } .s6 { width: 234px; margin-left: 3px; }
.grip { width: 2px; height: 15px; margin-left: 1px; background: repeating-linear-gradient(#aaa 0 2px, transparent 2px 4px); }
.sep { width: 1px; height: 16px; background: #b5b5b5; }
.caret { width: 0; height: 0; border: 4px solid transparent; border-top-color: #222; border-bottom: 0; margin-right: 0; }
.caret.off { border-top-color: #999; }
.ti { white-space: nowrap; color: #111; }
.tbtn { width: 75px; height: 23px; display: flex; align-items: center; padding-left: 3px; gap: 1px; border: 1px solid #1f7fd4; background: #d5e8f7; }
.tcb { width: 11px; height: 11px; background: #fff; border: 1px solid #999; }
.fx { font: italic 700 14px/16px "Liberation Serif", serif; width: 16px; text-align: center; color: #111; }
.pil { font: 700 15px/16px "Liberation Sans", sans-serif; width: 15px; text-align: center; color: #111; }

/* workspace */
.work { height: 630px; display: flex; flex: none; }
.rail { width: 24px; position: relative; background: #f8f8f8; overflow: hidden; flex: none; padding-top: 24px; }
.railart { position: absolute; left: 0; top: 0; width: 24px; height: 630px; }
.rl { position: relative; writing-mode: vertical-rl; text-orientation: upright; letter-spacing: 1px; line-height: 14px; margin-left: 6px; margin-top: 25px; color: #111; white-space: nowrap; }
.rl:nth-of-type(1) { margin-top: 0; }
.rl:nth-of-type(3), .rl:nth-of-type(6) { margin-top: 26px; }
.rl:nth-of-type(4), .rl:nth-of-type(7) { margin-top: 27px; }
.rl:nth-of-type(8) { margin-top: 24px; }
.rl.on { font-weight: 700; }
.railnav { position: absolute; left: 0; bottom: 3px; display: flex; }
.railnav svg { width: 11px; height: 12px; }

.side { width: 156px; flex: none; padding-left: 5px; }
.sidehead { height: 26px; display: flex; align-items: center; width: 149px; }
.sidehead span { margin-left: 34px; }
.sidehead svg { width: 12px; height: 12px; margin-left: 47px; }
.listbox { width: 149px; height: 200px; background: #fff; border: 1px solid #8a8f96; padding: 1px 2px; line-height: 14px; }
.selitem { display: inline-block; background: #d9d9d9; padding: 0 4px; width: 56px; }
.fav { width: 149px; height: 398px; margin-top: 3px; background: #fff; padding-top: 9px; }
.favhead { color: #0000e6; font-weight: 700; height: 14px; border-bottom: 1px solid #a5a5a5; line-height: 13px; box-sizing: content-box; padding-bottom: 0; margin-bottom: 7px; white-space: nowrap; }
.favitem { display: flex; align-items: center; height: 22px; padding-left: 16px; white-space: nowrap; letter-spacing: 0; }
.favitem svg { width: 9px; height: 9px; margin-right: 8px; }

.vsplit { width: 7px; flex: none; padding-top: 263px; }
.vsplit i { width: 6px; height: 100px; border: 1px solid #808080; background: #f0f0f0; }

.main { flex: 1; min-width: 0; display: flex; flex-direction: column; }
.bar2 { height: 26px; display: flex; align-items: flex-start; flex: none; position: relative; }
.seg2 { margin-left: 1px; width: 334px; height: 21px; background: #f6f6f6; display: flex; align-items: center; padding: 2px 0 0 3px; white-space: nowrap; }
.filelabel { margin-left: 41px; line-height: 24px; white-space: nowrap; }
.ratenote { margin-left: auto; margin-right: 10px; line-height: 26px; color: #0000f0; white-space: nowrap; }

.pane { height: 294px; flex: none; border: 1px solid #a6a6a6; border-right-color: #a6a6a6; margin-right: 0; background: #fff; display: flex; position: relative; width: 1178px; }
.gridwrap { flex: 1; min-width: 0; overflow: hidden; }
.grid { table-layout: fixed; border-collapse: separate; border-spacing: 0; }
.grid.top { width: 1140px; margin-top: 1px; }
.grid.low { width: 338px; margin-top: 1px; }
.c21 { width: 21px; } .c22 { width: 22px; } .c44 { width: 44px; } .c55 { width: 55px; } .c56 { width: 56px; } .c63 { width: 63px; }
.c65 { width: 65px; } .c81 { width: 81px; } .c91 { width: 91px; } .c101 { width: 101px; } .c161 { width: 161px; } .c194 { width: 194px; } .c201 { width: 201px; }
.h19 { height: 19px; } .h21 { height: 21px; } .h29 { height: 29px; } .h53 { height: 53px; } .h65 { height: 65px; }
.grid th, .grid td { padding: 0 2px; border-right: 1px solid #bdbdbd; border-bottom: 1px solid #bdbdbd; font-weight: 400; overflow: hidden; white-space: nowrap; line-height: 12px; color: #111; }
.grid th { background: #f0f0f0; text-align: center; line-height: 14px; }
.grid th.hot { background: linear-gradient(#fbe6b8, #f3bb62); }
.rn { background: #f0f0f0; text-align: center; }
.grid td.rn { padding: 0; font: 11px/12px "Liberation Mono", monospace; letter-spacing: -.6px; }
.seq { text-align: center; position: relative; }
.grid td.seq { font-size: 13px; line-height: 14px; }
.tree { text-align: right; }
.grid td.tree { line-height: 12px; }
.treeline { position: absolute; left: 18px; top: 0; width: 18px; height: 32px; border-left: 1px solid #bbb; border-bottom: 1px solid #bbb; }
.num { display: inline-block; font: 11px/12px "Liberation Mono", monospace; text-align: right; width: 18px; position: relative; margin-right: 2px; margin-top: 6px; letter-spacing: -.2px; }
.grid td.code { text-align: center; font: 11px/12px "Liberation Mono", monospace; letter-spacing: -.6px; }
.grid td.base { font: 11px/12px "Liberation Mono", monospace; letter-spacing: -.6px; padding-left: 2px; }
.grid td.desc { background: #fffff4; font-size: 12px; }
.grid td.rate { text-align: right; padding-right: 4px; font: 11px/12px "Liberation Mono", monospace; letter-spacing: -.6px; }
.grid td.amt { background: #fffff4; text-align: right; font: 11px/12px "Liberation Mono", monospace; letter-spacing: -.6px; padding-right: 2px; }
.ck { text-align: center; }
.cb { width: 13px; height: 13px; border: 1px solid #3c3c3c; background: #fff; margin: 0 auto; position: relative; }
.cb.on::after { content: ""; position: absolute; left: 3px; top: 0; width: 5px; height: 9px; border-right: 1px solid #777; border-bottom: 1px solid #777; transform: rotate(40deg); }

.vscroll { width: 15px; flex: none; background: #f0f0f0; display: flex; flex-direction: column; margin-right: 1px; }
.arrow { width: 15px; height: 10px; }
.vscroll .thumb { width: 15px; height: 17px; background: #cdcdcd; }
.vscroll.one { height: 292px; padding-top: 6px; }
.vscroll.one .arrow:first-child { margin-bottom: 245px; }
.vscroll.one .thumb { margin-bottom: 1px; }
.vscroll.one .arrow:last-child { margin-top: 0; }
.vscroll.two { height: 273px; margin-top: 1px; padding-top: 2px; }
.vscroll.two .arrow:first-child { margin-bottom: 5px; }
.vscroll.two .thumb { margin-bottom: auto; }

.redbox { position: absolute; left: 7px; top: 120px; width: 599px; height: 137px; border: 3px solid #f00; pointer-events: none; }

.hsplit { height: 8px; flex: none; display: flex; justify-content: center; padding-top: 1px; padding-right: 2px; }
.hsplit i { width: 100px; height: 6px; border: 1px solid #777; background: linear-gradient(#fff, #ddd); }

.tabs { height: 20px; flex: none; display: flex; align-items: center; padding-left: 3px; }
.tab { height: 19px; white-space: nowrap; line-height: 18px; padding: 0 5px; }
.tab.active { width: 82px; padding: 0 5px; border: 1px solid; border-color: #888 #f8f8f8 #f8f8f8 #888; background: #f3f3f3; }
.tab:not(.active) { margin: 0 8px 0 9px; padding: 0 1px; }
.tabsep { width: 1px; height: 19px; background: #a9a9a9; margin-left: 6px; }
.tab + .tabsep + .tab { margin-left: 9px; }
.tab:not(.active) + .tabsep { margin-left: 3px; }

.lower { height: 278px; margin-top: 2px; display: flex; flex: none; padding-left: 1px; }
.treebox { width: 145px; border: 1px solid #7f7f7f; background: #fff; padding-top: 1px; line-height: 14px; overflow: hidden; }
.troot { display: flex; align-items: center; height: 14px; padding-left: 7px; }
.troot svg { width: 10px; height: 8px; }
.troot span { margin-left: 4px; background: #d9d9d9; padding: 0 3px 0 3px; width: 56px; white-space: nowrap; }
.treebox ul { list-style: none; margin: 0 0 0 32px; padding: 0; border-left: 1px dotted #777; height: 92px; }
.treebox li { height: 14px; padding-left: 11px; position: relative; white-space: nowrap; left: -1px; }
.treebox li::before { content: ""; position: absolute; left: 1px; top: 7px; width: 8px; border-top: 1px dotted #777; }
.codebox { width: 1030px; margin-left: 3px; border: 1px solid #a6a6a6; background: #fff; display: flex; height: 278px; overflow: hidden; }
.codebox .gridwrap { height: 275px; }
.grid td.cd { font: 11px/12px "Liberation Mono", monospace; letter-spacing: -.6px; padding-left: 2px; }
.grid td.sel { background: #d5e7f7; }
.grid td.hotrn { background: linear-gradient(#fbe6b8, #f3bb62); }
.grid td.val { text-align: right; font: 11px/12px "Liberation Mono", monospace; letter-spacing: -.6px; padding: 0 2px 0 0; }

/* status */
.status { height: 20px; flex: none; display: flex; padding-top: 1px; }
.sc { height: 19px; background: #fafafa; border: 1px solid #dcdcdc; line-height: 17px; padding-left: 1px; white-space: nowrap; overflow: hidden; color: #111; }
.s-a { width: 382px; } .s-b { width: 381px; margin-left: 3px; padding-left: 0; } .s-c { width: 229px; margin-left: 2px; }
.s-d { width: 175px; margin-left: 3px; } .s-e { width: 189px; margin-left: 3px; }

/* taskbar */
.taskbar { height: 40px; flex: none; background: #07141a; display: flex; color: #e6e6e6; }
.start { width: 48px; background: #000; display: flex; align-items: center; justify-content: center; flex: none; }
.start svg { width: 16px; height: 16px; margin-right: 2px; }
.search { width: 344px; background: #333; display: flex; align-items: center; color: #9a9a9a; flex: none; padding-left: 10px; }
.ring { width: 18px; height: 18px; }
.search span { margin-left: 8px; white-space: nowrap; font-size: 14px; }
.mic { width: 12px; height: 18px; margin-left: auto; margin-right: 15px; }
.apps { display: flex; flex: none; }
.app { height: 40px; width: 50px; display: flex; align-items: center; justify-content: center; position: relative; }
.app svg { width: 24px; height: 24px; }
.app:nth-child(2) { width: 51px; } .app:nth-child(4) { width: 52px; } .app:nth-child(5) { width: 51px; }
.app:nth-child(6), .app:nth-child(7), .app:nth-child(8) { width: 49px; }
.app:nth-child(10) { width: 48px; }
.app.active { background: #2f3a3e; }
.app.run::after { content: ""; position: absolute; left: 5px; right: 5px; bottom: 0; height: 2px; background: #76b9ed; }
.app.active::after { left: 0; right: 0; }
.tray { flex: 1; display: flex; align-items: center; position: relative; }
.tlink { margin-left: 59px; width: 24px; white-space: nowrap; }
.cpu { margin-left: 19px; width: 48px; display: flex; flex-direction: column; align-items: center; line-height: 18px; white-space: nowrap; }
.tr { flex: none; }
.t1 { width: 12px; height: 8px; margin-left: 19px; }
.t2 { width: 18px; height: 14px; margin-left: 10px; }
.t3 { width: 16px; height: 16px; margin-left: 9px; }
.t4 { width: 16px; height: 16px; margin-left: 5px; }
.t5 { width: 23px; height: 16px; margin-left: 8px; }
.tzh { margin-left: 9px; font-weight: 700; font-size: 14px; color: #fff; width: 14px; }
.t6 { width: 17px; height: 17px; margin-left: 13px; }
.clock { margin-left: 17px; width: 60px; display: flex; flex-direction: column; align-items: center; line-height: 18px; white-space: nowrap; }
.notif { position: relative; margin-left: 21px; width: 24px; height: 30px; }
.notif svg { width: 14px; height: 14px; margin: 3px 0 0 2px; }
.notif span { position: absolute; left: 3px; top: 11px; width: 19px; height: 19px; border-radius: 50%; background: #444; border: 1px solid #999; color: #fff; font-weight: 700; font-size: 12px; line-height: 17px; text-align: center; }
```
